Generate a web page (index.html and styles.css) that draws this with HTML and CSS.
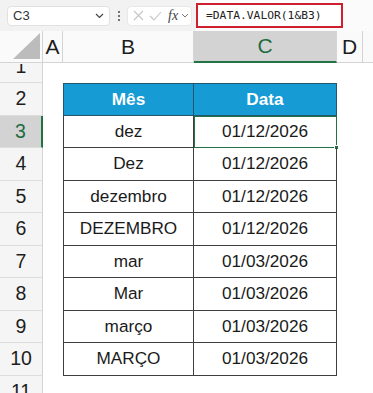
FILE: index.html
```html
<!DOCTYPE html>
<html>
<head>
<meta charset="utf-8">
<link rel="stylesheet" href="styles.css">
</head>
<body>
<div class="toolbar">
  <div class="namebox"><span>C3</span>
    <svg class="chev" width="9" height="6" viewBox="0 0 9 6"><path d="M1 1l3.5 3.5L8 1" fill="none" stroke="#444" stroke-width="1.2"/></svg>
  </div>
  <svg class="dots" width="4" height="12" viewBox="0 0 4 12"><circle cx="2" cy="2" r="1.1" fill="#555"/><circle cx="2" cy="6" r="1.1" fill="#555"/><circle cx="2" cy="10" r="1.1" fill="#555"/></svg>
  <div class="fxbox">
    <svg width="11" height="11" viewBox="0 0 11 11"><path d="M1 1l9 9M10 1l-9 9" stroke="#c4c4c4" stroke-width="1.1"/></svg>
    <svg width="13" height="10" viewBox="0 0 13 10"><path d="M1 5l4 4 7-8" fill="none" stroke="#c4c4c4" stroke-width="1.1"/></svg>
    <span class="fx">fx</span>
    <svg width="8" height="5" viewBox="0 0 8 5"><path d="M1 1l3 3 3-3" fill="none" stroke="#777" stroke-width="1"/></svg>
  </div>
  <div class="formula"><div class="fbox">=DATA.VALOR(1&amp;B3)</div></div>
</div>
<div class="sheet">
  <div class="corner"><svg width="27" height="26" viewBox="0 0 27 26"><polygon points="27,0 27,26 0,26" fill="#bcbcbc"/></svg></div>
  <div class="ch">A</div>
  <div class="ch">B</div>
  <div class="ch sel">C</div>
  <div class="ch">D</div>
  <div class="ch last"></div>

  <div class="rh r1"><span>1</span></div><div class="c"></div><div class="c"></div><div class="c"></div><div class="c"></div><div class="c"></div>

  <div class="rh">2</div><div class="c"></div><div class="t th tb">Mês</div><div class="t th">Data</div><div class="c"></div><div class="c"></div>
  <div class="rh rsel">3</div><div class="c"></div><div class="t tb">dez</div><div class="t active">01/12/2026</div><div class="c"></div><div class="c"></div>
  <div class="rh">4</div><div class="c"></div><div class="t tb">Dez</div><div class="t">01/12/2026</div><div class="c"></div><div class="c"></div>
  <div class="rh">5</div><div class="c"></div><div class="t tb">dezembro</div><div class="t">01/12/2026</div><div class="c"></div><div class="c"></div>
  <div class="rh">6</div><div class="c"></div><div class="t tb">DEZEMBRO</div><div class="t">01/12/2026</div><div class="c"></div><div class="c"></div>
  <div class="rh">7</div><div class="c"></div><div class="t tb">mar</div><div class="t">01/03/2026</div><div class="c"></div><div class="c"></div>
  <div class="rh">8</div><div class="c"></div><div class="t tb">Mar</div><div class="t">01/03/2026</div><div class="c"></div><div class="c"></div>
  <div class="rh">9</div><div class="c"></div><div class="t tb">março</div><div class="t">01/03/2026</div><div class="c"></div><div class="c"></div>
  <div class="rh">10</div><div class="c"></div><div class="t tb">MARÇO</div><div class="t">01/03/2026</div><div class="c"></div><div class="c"></div>
  <div class="rh r11"><span>11</span></div><div class="c"></div><div class="c"></div><div class="c"></div><div class="c"></div><div class="c"></div>
</div>
</body>
</html>
```
FILE: styles.css
```css
html, body {
  margin: 0;
  padding: 0;
  width: 373px;
  height: 393px;
  overflow: hidden;
  background: #fff;
  font-family: "Liberation Sans", Arial, sans-serif;
}
.toolbar {
  height: 31px;
  box-sizing: border-box;
  background: #f2f2f2;
  display: flex;
  align-items: center;
  padding-left: 7px;
}
.namebox {
  width: 103px;
  height: 20px;
  box-sizing: border-box;
  background: #fff;
  border: 1px solid #e1e1e1;
  border-radius: 4px;
  display: flex;
  align-items: center;
  justify-content: space-between;
  padding: 0 5px 0 5px;
  font-size: 13px;
  color: #333;
}
.dots {
  margin-left: 7px;
  margin-right: 6px;
}
.fxbox {
  width: 65px;
  height: 20px;
  box-sizing: border-box;
  background: #fff;
  border: 1px solid #e8e8e8;
  border-radius: 4px;
  display: flex;
  align-items: center;
  gap: 5px;
  padding-left: 5px;
}
.fx {
  font-family: "Liberation Serif", serif;
  font-style: italic;
  font-size: 14px;
  color: #444;
  margin-left: 1px;
  margin-right: -2px;
}
.formula {
  flex: 1;
  height: 31px;
  margin-left: 4px;
  background: #fbfbfb;
  display: flex;
  align-items: center;
}
.fbox {
  width: 147px;
  height: 25px;
  box-sizing: border-box;
  border: 2px solid #cf1f2e;
  background: #fff;
  display: flex;
  align-items: center;
  padding-left: 8px;
  font-family: "DejaVu Sans Mono", "Liberation Mono", monospace;
  font-size: 11.3px;
  color: #222;
}
.sheet {
  display: grid;
  grid-template-columns: 43px 20px 131px 143px 26px 10px;
  grid-template-rows: 32px 20px repeat(9, 32.5px) 20px;
}
.corner {
  background: #fafafa;
  border-right: 1px solid #d4d4d4;
  border-bottom: 1px solid #d4d4d4;
  box-sizing: border-box;
  display: flex;
  align-items: flex-end;
  justify-content: flex-end;
  padding: 0 2px 3px 0;
}
.ch {
  background: #fafafa;
  border-right: 1px solid #d4d4d4;
  border-bottom: 1px solid #d4d4d4;
  box-sizing: border-box;
  display: flex;
  align-items: center;
  justify-content: center;
  font-size: 21px;
  color: #1d1d1d;
}
.ch.sel {
  background: #d3d3d3;
  color: #1e6b41;
  border-bottom: 2px solid #217346;
}
.ch.last {
  border-right: none;
}
.rh {
  background: #f5f5f5;
  border-right: 1px solid #d4d4d4;
  border-bottom: 1px solid #dddddd;
  box-sizing: border-box;
  display: flex;
  align-items: center;
  justify-content: center;
  font-size: 19.5px;
  color: #1d1d1d;
  overflow: hidden;
}
.rh.r1 {
  align-items: flex-end;
}
.rh.r1 span {
  line-height: 1;
  margin-bottom: 6px;
  clip-path: inset(7.5px 0 0 0);
}
.rh.r11 {
  align-items: flex-start;
  border-bottom: none;
}
.rh.r11 span {
  line-height: 1;
  margin-top: 6px;
}
.rh.rsel {
  background: #d3d3d3;
  color: #1e6b41;
  border-right: 2px solid #217346;
}
.t {
  display: flex;
  align-items: center;
  justify-content: center;
  font-size: 17.2px;
  color: #1a1a1a;
  border-right: 1px solid #3f3f3f;
  border-bottom: 1px solid #3f3f3f;
  box-sizing: border-box;
  position: relative;
}
.tb {
  border-left: 1px solid #3f3f3f;
}
.th {
  background: #169bd5;
  color: #fff;
  font-weight: bold;
  border-top: 1px solid #3f3f3f;
  border-color: #25556b;
}
.active {
  outline: 1.5px solid #217346;
  outline-offset: -1px;
}
.active::after {
  content: "";
  position: absolute;
  right: -3px;
  bottom: -3px;
  width: 5px;
  height: 5px;
  background: #217346;
  border: 1px solid #fff;
  box-sizing: border-box;
}
```
